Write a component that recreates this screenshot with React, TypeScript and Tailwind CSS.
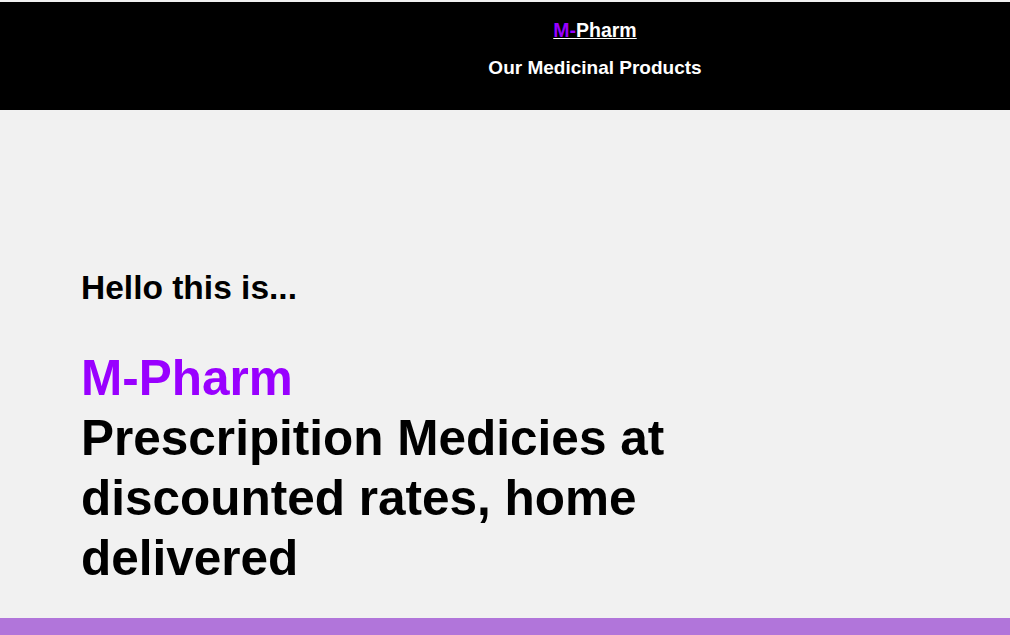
export default function App() {
  return (
    <div className="min-h-screen bg-[#f1f1f1] pt-[2px] font-['Liberation_Sans',Arial,sans-serif]">
      {/* Header */}
      <header className="flex h-[108px] bg-black">
        <div className="w-[180px]" />
        <nav className="flex flex-1 flex-col items-center gap-[16px] pt-[17px] text-[19px] font-bold leading-[22px] text-white">
          <a href="#" className="text-[19.5px] underline">
            <span className="text-[#9900ff]">M-</span>Pharm
          </a>
          <a href="#">Our Medicinal Products</a>
        </nav>
      </header>

      {/* Hero */}
      <section className="h-[508px] pl-[81px] pt-[158px]">
        <h2 className="text-[33.5px] font-bold leading-[40px] text-black">Hello this is...</h2>
        <h1 className="mt-[40px] max-w-[640px] text-[49.5px] font-bold leading-[60px] text-black">
          <span className="text-[#9900ff]">M-Pharm</span>
          <br />
          Prescripition Medicies at discounted rates, home delivered
        </h1>
      </section>

      <footer className="h-[40px] bg-[#b175da]" />
    </div>
  );
}
